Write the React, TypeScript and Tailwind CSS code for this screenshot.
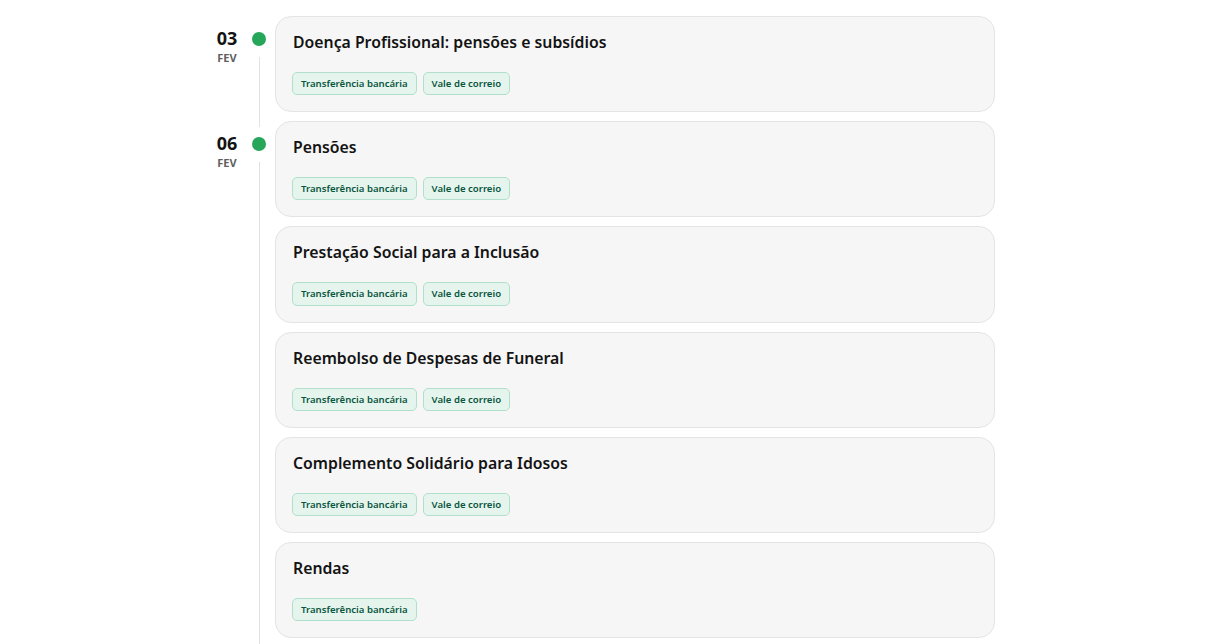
import React from 'react';

interface Payment {
  title: string;
  methods: string[];
}

interface DayGroup {
  day: string;
  month: string;
  items: Payment[];
}

const both = ['Transferência bancária', 'Vale de correio'];

const groups: DayGroup[] = [
  {
    day: '03',
    month: 'FEV',
    items: [{ title: 'Doença Profissional: pensões e subsídios', methods: both }],
  },
  {
    day: '06',
    month: 'FEV',
    items: [
      { title: 'Pensões', methods: both },
      { title: 'Prestação Social para a Inclusão', methods: both },
      { title: 'Reembolso de Despesas de Funeral', methods: both },
      { title: 'Complemento Solidário para Idosos', methods: both },
      { title: 'Rendas', methods: ['Transferência bancária'] },
    ],
  },
];

const PaymentCard = ({ item }: { item: Payment }) => (
  <div className="rounded-2xl border border-[#e4e4e4] bg-[#f6f6f6] pr-[17px] pl-4 pt-[13px] pb-4">
    <h3 className="pl-px text-[15.8px] leading-6 font-semibold text-[#131313]">{item.title}</h3>
    <div className="mt-[18px] flex gap-[6px]">
      {item.methods.map((m) => (
        <span
          key={m}
          className="rounded-[5px] border border-[#b0e0cc] bg-[#e5f5ee] px-2 py-[3px] text-[9.6px] leading-[15.2px] font-semibold text-[#0a5540]"
        >
          {m}
        </span>
      ))}
    </div>
  </div>
);

export default function App() {
  return (
    <div
      className="min-h-screen bg-white pt-4"
      style={{ fontFamily: '"Noto Sans", "Open Sans", sans-serif' }}
    >
      <div className="mx-auto w-[812px] pr-[17px]">
        {groups.map((g) => (
          <div key={g.day} className="flex pb-[9px]">
            <div className="ml-[3px] w-12 pt-[10px] text-center">
              <div className="text-[18px] leading-6 font-bold text-[#131313]">{g.day}</div>
              <div className="mt-px text-[11px] leading-[14px] font-bold text-[#5f5f5f]">
                {g.month}
              </div>
            </div>
            <div className="ml-px flex w-[14px] flex-col items-center pt-4">
              <span className="h-[14px] w-[14px] rounded-full bg-[#26a65b]" />
              <span className="mt-[11px] -mb-[15px] w-px flex-1 bg-[#e2e2e2]" />
            </div>
            <div className="ml-[9px] flex flex-1 flex-col gap-[9px]">
              {g.items.map((item) => (
                <PaymentCard key={item.title} item={item} />
              ))}
            </div>
          </div>
        ))}
      </div>
    </div>
  );
}
